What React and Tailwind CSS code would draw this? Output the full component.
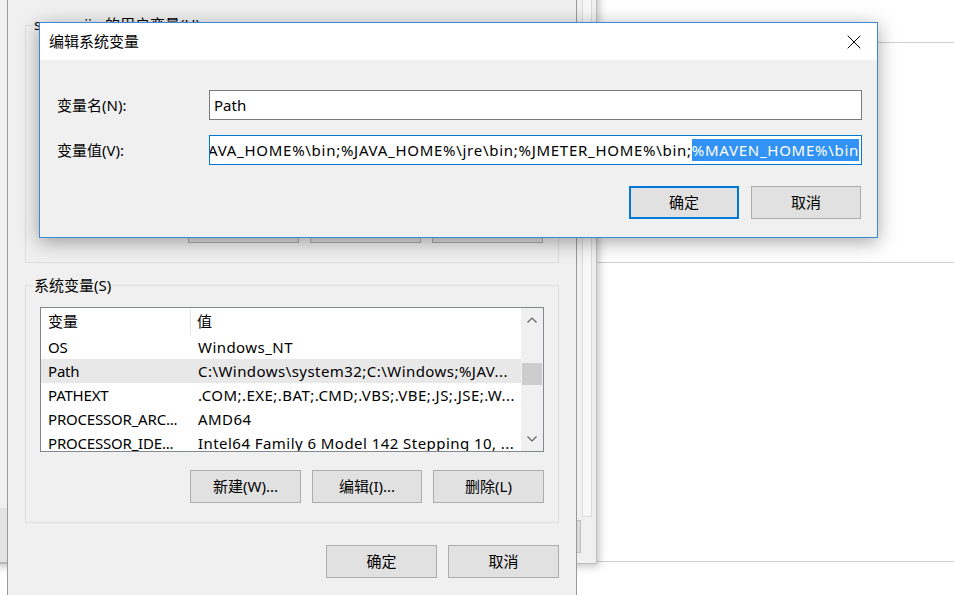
import { X } from 'lucide-react'

const font = { fontFamily: '"Noto Sans", "Noto Sans CJK SC", sans-serif' }

const sysVars = [
  { name: 'OS', value: 'Windows_NT' },
  { name: 'Path', value: 'C:\\Windows\\system32;C:\\Windows;%JAV...', selected: true },
  { name: 'PATHEXT', value: '.COM;.EXE;.BAT;.CMD;.VBS;.VBE;.JS;.JSE;.W...' },
  { name: 'PROCESSOR_ARC...', value: 'AMD64' },
  { name: 'PROCESSOR_IDE...', value: 'Intel64 Family 6 Model 142 Stepping 10, ...' },
]

function WinButton({ children, className = '' }) {
  return (
    <div
      className={`flex items-center justify-center border border-[#adadad] bg-[#e1e1e1] text-[15px] text-black ${className}`}
    >
      {children}
    </div>
  )
}

function Chevron({ down }) {
  return (
    <svg width="10" height="6" viewBox="0 0 10 6" className="text-[#606060]">
      <path
        d={down ? 'M0.5 0.5 L5 5 L9.5 0.5' : 'M0.5 5.5 L5 1 L9.5 5.5'}
        fill="none"
        stroke="currentColor"
        strokeWidth="1.2"
      />
    </svg>
  )
}

function VarList() {
  return (
    <div className="flex w-[504px] h-[145px] border border-[#828790] bg-white overflow-hidden">
      <div className="flex-1 flex flex-col overflow-hidden">
        <div className="flex h-[27px] shrink-0 items-center">
          <div className="w-[150px] h-full flex items-center pl-[7px] border-r border-[#e5e5e5]">变量</div>
          <div className="pl-[6px]">值</div>
        </div>
        {sysVars.map((v) => (
          <div
            key={v.name}
            className={`flex h-[24px] shrink-0 items-center whitespace-nowrap ${v.selected ? 'bg-[#e8e8e8]' : ''}`}
          >
            <div className="w-[150px] pl-[7px] overflow-hidden tracking-[-0.2px]">{v.name}</div>
            <div className="pl-[7px] overflow-hidden tracking-[0.45px]">{v.value}</div>
          </div>
        ))}
      </div>
      <div className="w-[22px] shrink-0 bg-[#f0f0f0] flex flex-col items-center">
        <div className="h-[24px] flex items-center justify-center">
          <Chevron />
        </div>
        <div className="mt-[31px] w-[20px] h-[22px] bg-[#cdcdcd]" />
        <div className="mt-auto h-[24px] flex items-center justify-center">
          <Chevron down />
        </div>
      </div>
    </div>
  )
}

function EnvDialog() {
  return (
    <div className="absolute left-[7px] top-0 w-[570px] h-[600px] bg-[#f0f0f0] border-l border-r border-[#9a9a9a] px-[17px] text-[15px] text-black">
      {/* user variables */}
      <div className="relative mt-[25px] h-[238px] border border-[#dcdcdc] flex flex-col justify-end items-end pr-[15px] pb-[19px]">
        <span className="absolute left-[7px] -top-[12px] bg-[#f0f0f0] px-[1px] leading-[20px] whitespace-nowrap">
          sanyanjin 的用户变量(U)
        </span>
        <div className="flex gap-[11px]">
          <WinButton className="w-[111px] h-[33px]">新建(N)...</WinButton>
          <WinButton className="w-[111px] h-[33px]">编辑(E)...</WinButton>
          <WinButton className="w-[111px] h-[33px]">删除(D)</WinButton>
        </div>
      </div>

      {/* system variables */}
      <div className="relative mt-[22px] h-[238px] border border-[#dcdcdc] pt-[21px] pl-[14px]">
        <span className="absolute left-[7px] -top-[11px] bg-[#f0f0f0] px-[1px] leading-[20px] whitespace-nowrap">
          系统变量(S)
        </span>
        <VarList />
        <div className="w-[504px] mt-[18px] flex justify-end gap-[11px]">
          <WinButton className="w-[111px] h-[33px]">新建(W)...</WinButton>
          <WinButton className="w-[110px] h-[33px]">编辑(I)...</WinButton>
          <WinButton className="w-[111px] h-[33px]">删除(L)</WinButton>
        </div>
      </div>

      <div className="mt-[22px] flex justify-end gap-[11px]">
        <WinButton className="w-[111px] h-[33px]">确定</WinButton>
        <WinButton className="w-[111px] h-[33px]">取消</WinButton>
      </div>
    </div>
  )
}

function EditDialog() {
  return (
    <div className="absolute left-[39px] top-[22px] w-[839px] h-[216px] border border-[#3c8ad4] bg-[#f0f0f0] shadow-[0_4px_18px_rgba(0,0,0,0.35)] text-[15px] text-black flex flex-col">
      <div className="h-[37px] shrink-0 bg-white flex items-center pl-[9px]">
        <span className="flex-1">编辑系统变量</span>
        <div className="w-[46px] h-full flex items-center justify-center">
          <X size={24} strokeWidth={1} className="text-black" />
        </div>
      </div>
      <div className="flex-1 pl-[17px] pr-[15px] pt-[30px]">
        <div className="flex items-center h-[30px]">
          <div className="w-[152px]">变量名(N):</div>
          <div className="flex-1 h-full border border-[#7a7a7a] bg-white flex items-center px-[4px]">Path</div>
        </div>
        <div className="flex items-center h-[30px] mt-[15px]">
          <div className="w-[152px]">变量值(V):</div>
          <div className="flex-1 min-w-0 h-full border border-[#0078d7] bg-white flex items-center justify-end overflow-hidden px-[2px] whitespace-nowrap tracking-[0.72px]">
            <span className="shrink-0">C:\Windows\system32;C:\Windows;%JAVA_HOME%\bin;%JAVA_HOME%\jre\bin;%JMETER_HOME%\bin;</span>
            <span className="shrink-0 bg-[#3393f5] text-white">%MAVEN_HOME%\bin</span>
          </div>
        </div>
        <div className="mt-[21px] flex justify-end gap-[12px] pr-[1px]">
          <WinButton className="w-[110px] h-[33px] !border-2 !border-[#0078d7]">确定</WinButton>
          <WinButton className="w-[110px] h-[33px]">取消</WinButton>
        </div>
      </div>
    </div>
  )
}

export default function App() {
  return (
    <div style={font} className="relative w-[954px] h-[595px] overflow-hidden bg-white">
      {/* window in the back, right side */}
      <div className="absolute left-[560px] top-0 w-[400px] h-[595px] bg-white flex flex-col">
        <div className="h-[43px] shrink-0 border-b border-[#cfcfcf]" />
        <div className="h-[220px] shrink-0 border-b border-[#cfcfcf]" />
        <div className="h-[299px] shrink-0 border-b border-[#cfcfcf]" />
      </div>

      {/* system properties window */}
      <div className="absolute -left-[20px] -top-[10px] w-[617px] h-[574px] bg-[#f0f0f0] border-r border-b border-[#bcbcbc] shadow-[2px_2px_8px_rgba(0,0,0,0.25)] flex">
        <div className="w-[27px] shrink-0 flex flex-col">
          <div className="mt-[518px] ml-[20px] w-[8px] h-[55px] bg-[#e3e3e3] border-b border-[#b5b5b5]" />
        </div>
        <div className="flex-1" />
        <div className="w-[30px] shrink-0 flex flex-col pr-[4px]">
          <div className="h-[527px] ml-[16px] border-l border-r border-b border-[#dadada] bg-[#f7f7f7]" />
          <div className="mt-[3px] ml-[4px] w-[11px] h-[33px] bg-[#dcdcdc] border border-[#c0c0c0]" />
        </div>
      </div>

      <EnvDialog />
      <EditDialog />
    </div>
  )
}
